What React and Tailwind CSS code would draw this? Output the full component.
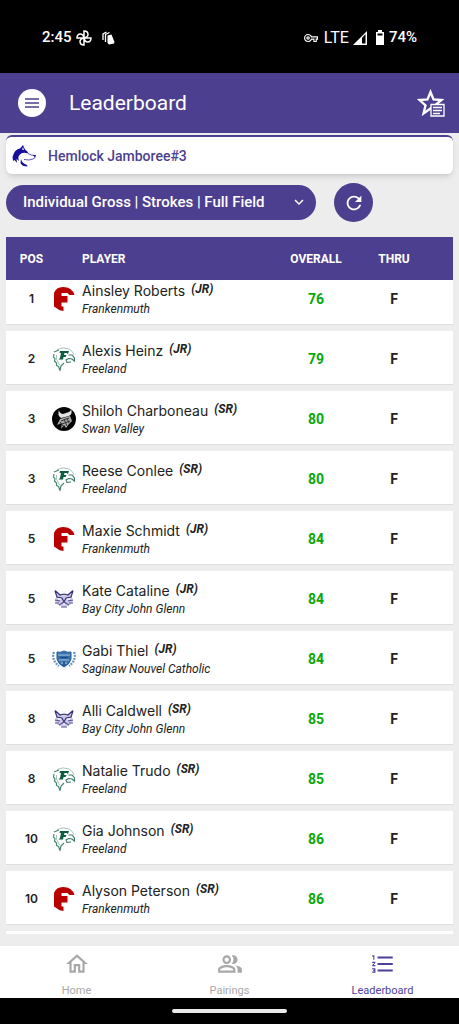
import {
  MdFormatListNumbered,
  MdKeyboardArrowDown,
  MdOutlineHome,
  MdOutlinePeopleAlt,
  MdOutlineVpnKey,
  MdRefresh,
} from 'react-icons/md';

const players = [
  { pos: 1, name: 'Ainsley Roberts', year: 'JR', school: 'Frankenmuth', score: 76 },
  { pos: 2, name: 'Alexis Heinz', year: 'JR', school: 'Freeland', score: 79 },
  { pos: 3, name: 'Shiloh Charboneau', year: 'SR', school: 'Swan Valley', score: 80 },
  { pos: 3, name: 'Reese Conlee', year: 'SR', school: 'Freeland', score: 80 },
  { pos: 5, name: 'Maxie Schmidt', year: 'JR', school: 'Frankenmuth', score: 84 },
  { pos: 5, name: 'Kate Cataline', year: 'JR', school: 'Bay City John Glenn', score: 84 },
  { pos: 5, name: 'Gabi Thiel', year: 'JR', school: 'Saginaw Nouvel Catholic', score: 84 },
  { pos: 8, name: 'Alli Caldwell', year: 'SR', school: 'Bay City John Glenn', score: 85 },
  { pos: 8, name: 'Natalie Trudo', year: 'SR', school: 'Freeland', score: 85 },
  { pos: 10, name: 'Gia Johnson', year: 'SR', school: 'Freeland', score: 86 },
  { pos: 10, name: 'Alyson Peterson', year: 'SR', school: 'Frankenmuth', score: 86 },
];

function FrankenmuthLogo() {
  return (
    <svg viewBox="0 0 24 24" className="size-6 shrink-0" fill="#b90000" aria-hidden="true">
      <path d="M2 6 Q4 0 11 0 Q20 0 22.500 8 H17.500 L15.500 6 H9.500 V9 H15.500 V15.500 H9.500 V19.500 H11.500 V24 Q7 23.500 5 21.500 L2 19.500 Z" />
    </svg>
  );
}

function FreelandLogo() {
  return (
    <svg viewBox="0 0 24 24" className="size-6 shrink-0" fill="none" aria-hidden="true">
      <path d="M5 2.500 Q11 -0.500 17 2 Q21 4 22 8" stroke="#a5c6ba" strokeWidth="1" />
      <path d="M2 5 L7 3 M2 7 L1.500 10 L3 12 L2.500 14 L4.500 16 L4.500 18.500 L6.500 19.500 L8 23.500 L9 19 L12 16" stroke="#4a8570" strokeWidth="1.200" />
      <path d="M4.500 8 V12 L6.500 16 L7.500 18" stroke="#a5c6ba" strokeWidth="1" />
      <path d="M8 4 H17 L16 7 L14.500 6 H12.500 L12 8 H14.500 L13.500 10 H11.500 L11 12.500 H6.500 L8 11 L9 6 H7.500 Z" fill="#0d5b40" />
      <path d="M16.500 8 L20 8 L22.500 11 L22.500 14 L20 12 L16.500 11.500 L14 13 L15 15.500 L19 15" stroke="#367761" strokeWidth="1.100" />
    </svg>
  );
}

function SwanValleyLogo() {
  return (
    <svg viewBox="0 0 24 24" className="size-6 shrink-0" fill="none" aria-hidden="true">
      <circle cx="12" cy="12" r="12" fill="#050505" />
      <path d="M7 3 Q7 6 11 7 L17 5 Q19 4 19 2 Q21 7 17 9 L9 11 Q5 8 7 3 Z" fill="#e2e2e2" />
      <path d="M8 12 L18 9 L20 14 L17 17 L14 21 L12 18 L9 22 L10 16 L5 18 Z" fill="#a9a9a9" />
      <path d="M9 14 L17 11 M10 17 L18 14 M12 12 L15 19 M8 15 L12 20 M15 11 L17 16" stroke="#333" strokeWidth="1" />
    </svg>
  );
}

function JohnGlennLogo() {
  return (
    <svg viewBox="0 0 24 24" className="size-6 shrink-0" fill="none" aria-hidden="true">
      <path d="M4 5 L9 7 H15 L20 5 L20 10 L21 14 L18 18 L12 20 L6 18 L3 14 L4 10 Z" fill="#cfcce2" />
      <path d="M3 3.500 L8 8 L12 7 L16 8 L21 3.500 M3 4 L5 10 L10 11 L12 15 L14 11 L19 10 L21 4" stroke="#38327f" strokeWidth="1.200" />
      <path d="M3 13 L8 14 M3 16 L7 16 M21 13 L16 14 M21 16 L17 16 M7 18 L12 15 L17 18 M9 20 H15" stroke="#544e98" strokeWidth="1.200" />
      <path d="M6 12 H9 M15 12 H18 M11 17 H13" stroke="#fff" strokeWidth="1" />
    </svg>
  );
}

function NouvelLogo() {
  return (
    <svg viewBox="0 0 24 24" className="size-6 shrink-0" fill="none" aria-hidden="true">
      <path d="M2 5 Q-1 13 7 19 M22 5 Q25 13 17 19" stroke="#6c92bd" strokeWidth="2.200" strokeDasharray="2 1" />
      <path d="M5 5 Q9 6 12 4 Q15 6 19 5 V12 Q18 17 12 20 Q6 17 5 12 Z" fill="#3973ad" stroke="#245c9b" strokeWidth="1" />
      <path d="M6 8 H18 M7 13 H17 M9 16 H15" stroke="#a9c6df" strokeWidth="1" />
      <path d="M8 10.500 H16 M12 14 V19" stroke="#194c88" strokeWidth="1.500" />
    </svg>
  );
}

function HuskyLogo() {
  return (
    <svg viewBox="0 0 24 22" className="w-6 shrink-0" fill="#17109b" aria-hidden="true">
      <path d="M1 16 L0.500 12 L2 8 Q4 4 8 3.500 L11 0 L13 4.500 Q15.500 6 16.500 8.500 L14 8 Q10 7 7.500 10 Q5.500 12 7 16 L4.500 14 L5 18 L2.500 15 Z" />
      <path d="M16 8.500 Q19 10.500 23 10.500 Q24 13 21 14 L17 15 L12 14.500" fill="none" stroke="#5b57b5" strokeWidth="1" />
      <path d="M21 10 H24 L23 12.500 Z" />
      <path d="M9 14 Q10 18.500 15 20 L15.500 21.500 Q10 21.500 8.500 18 Z" />
      <path d="M10 4.500 L11 2 L12 5 Z" fill="#fff" />
    </svg>
  );
}

const logos = {
  Frankenmuth: FrankenmuthLogo,
  Freeland: FreelandLogo,
  'Swan Valley': SwanValleyLogo,
  'Bay City John Glenn': JohnGlennLogo,
  'Saginaw Nouvel Catholic': NouvelLogo,
};

function StatusBar() {
  return (
    <div className="flex h-[73px] shrink-0 items-center justify-between bg-black pt-0.5 pr-[42px] pl-[42px] text-[15px] font-medium text-white">
      <div className="flex items-center">
        <span>2:45</span>
        <svg viewBox="0 0 16 16" className="ml-1 size-4" fill="none" stroke="white" strokeWidth="1.500" aria-hidden="true">
          <path d="M8 8 V1 Q12 1 12 4.500 Q12 7 8 8 Z M8 8 H15 Q15 12 11.500 12 Q9 12 8 8 Z M8 8 V15 Q4 15 4 11.500 Q4 9 8 8 Z M8 8 H1 Q1 4 4.500 4 Q7 4 8 8 Z" />
        </svg>
        <svg viewBox="0 0 14 14" className="ml-2.5 size-3.5" fill="white" aria-hidden="true">
          <path d="M5.500 4.500 L9.500 3.500 L12.500 11 L12 12.500 L7 13.500 L5.500 12 Z" />
          <path d="M3.500 11 V3.500 L7.500 1.500 M1 9 V3 L4.500 1" fill="none" stroke="white" strokeWidth="1.300" />
        </svg>
      </div>
      <div className="flex items-center">
        <MdOutlineVpnKey className="size-3.5" />
        <span className="ml-1.5 text-base font-normal">LTE</span>
        <svg viewBox="0 0 14 14" className="ml-1 size-3.5" aria-hidden="true">
          <path d="M0 14 L14 0 V14 Z" fill="white" />
          <path d="M9 7 L12.500 3 V12.500 H9 Z" fill="black" />
        </svg>
        <svg viewBox="0 0 10 15" className="ml-2 h-[15px] w-2.5" aria-hidden="true">
          <path d="M3 0 H7 V2 H9 V15 H1 V2 H3 Z" fill="white" />
          <path d="M2.500 3.500 H7.500 V5.500 H2.500 Z" fill="black" />
        </svg>
        <span className="ml-1">74%</span>
      </div>
    </div>
  );
}

function Header() {
  return (
    <header className="flex h-[60px] shrink-0 items-center bg-[#4d3f8f] pl-[18px] pr-3.5 text-white">
      <button aria-label="Menu" className="flex size-7 items-center justify-center rounded-full bg-white">
        <svg viewBox="0 0 14 10" className="h-2.5 w-3.5" stroke="#4d3f8f" strokeWidth="1.300" aria-hidden="true">
          <path d="M0 1 H14 M0 5 H14 M0 9 H14" />
        </svg>
      </button>
      <h1 className="ml-[23px] flex-1 pt-0.5 text-[21px]">Leaderboard</h1>
      <button aria-label="Favorites">
        <svg viewBox="0 0 28 28" className="size-7" fill="none" aria-hidden="true">
          <path d="M13.500 3 L16.500 10.500 L24.500 11 L18.500 16 L20.500 24 L13.500 19.500 L6.500 24.500 L8.500 16.500 L2.500 11 L10.500 10.500 Z" stroke="white" strokeWidth="2.300" />
          <path d="M14 15.500 H27 V27 H14 Z" fill="#4d3f8f" stroke="white" strokeWidth="1.300" />
          <path d="M16 18.500 H25 M16 21.500 H25 M16 24.500 H23" stroke="white" strokeWidth="1.300" />
        </svg>
      </button>
    </header>
  );
}

function Leaderboard() {
  return (
    <table className="w-full table-fixed border-separate border-spacing-0">
      <thead>
        <tr className="h-[43px] bg-[#4d3f8f] text-xs font-bold text-white">
          <th className="w-[46px] p-0 pl-[5px] text-center">POS</th>
          <th className="p-0 pl-[30px] text-left">PLAYER</th>
          <th className="w-[78px] p-0 text-center">OVERALL</th>
          <th className="w-[98px] p-0 pr-5 text-center">THRU</th>
        </tr>
      </thead>
      <tbody className="text-[#222] [&_td]:border-b-[6px] [&_td]:border-[#ededed] [&_td]:bg-white [&_td]:pt-[10px] [&_td]:pb-2 [&_td]:shadow-[inset_0_-1px_0_#dedede] [&_tr:first-child_td]:pt-px">
        {players.map((player) => {
          const Logo = logos[player.school];
          return (
            <tr key={player.name}>
              <td className="pl-[5px] text-center font-[Inter] text-xs font-semibold">{player.pos}</td>
              <td>
                <div className="flex items-center gap-1.5 whitespace-nowrap">
                  <Logo />
                  <div>
                    <div className="flex gap-1.5 leading-5">
                      <span className="font-[Inter] text-[14px]">{player.name}</span>
                      <span className="text-xs leading-4 font-bold italic">({player.year})</span>
                    </div>
                    <div className="text-xs leading-4 italic">{player.school}</div>
                  </div>
                </div>
              </td>
              <td className="text-center text-sm font-bold text-[#08a808]">{player.score}</td>
              <td className="pr-5 text-center text-sm font-bold">F</td>
            </tr>
          );
        })}
        <tr aria-hidden="true">
          <td colSpan={4}></td>
        </tr>
      </tbody>
    </table>
  );
}

function BottomNav() {
  return (
    <nav className="grid h-[52px] shrink-0 grid-cols-3 bg-white text-[11px] text-[#a8a8a8]">
      <a href="#home" className="flex flex-col items-center justify-between pt-[5px]">
        <MdOutlineHome className="size-[26px]" />
        <span className="leading-[14px]">Home</span>
      </a>
      <a href="#pairings" className="flex flex-col items-center justify-between pt-[5px]">
        <MdOutlinePeopleAlt className="size-[26px]" />
        <span className="leading-[14px]">Pairings</span>
      </a>
      <a href="#leaderboard" className="flex flex-col items-center justify-between pt-[5px] text-[#4d3f9b]">
        <MdFormatListNumbered className="size-[26px]" />
        <span className="leading-[14px]">Leaderboard</span>
      </a>
    </nav>
  );
}

export default function App() {
  return (
    <div className="flex h-screen flex-col overflow-hidden bg-[#ededed] font-[Roboto,sans-serif]">
      <StatusBar />
      <Header />
      <main className="flex min-h-0 flex-1 flex-col px-1.5 pt-0.5 pb-3">
        <div className="flex h-[39px] shrink-0 items-center gap-3 rounded-md border-t-2 border-[#4d3f8f] bg-white pl-1.5 text-sm font-medium text-[#4d3f8f] shadow-md">
          <HuskyLogo />
          <h2>Hemlock Jamboree#3</h2>
        </div>
        <div className="mt-[9px] flex shrink-0 items-center gap-[18px]">
          <div className="relative h-[35px] w-[310px] text-white">
            <select aria-label="Leaderboard view" className="size-full appearance-none rounded-full bg-[#4d3f8f] pl-[17px] text-[15px] font-medium">
              <option>Individual Gross | Strokes | Full Field</option>
            </select>
            <MdKeyboardArrowDown className="pointer-events-none absolute top-2 right-2 size-[18px]" />
          </div>
          <button aria-label="Refresh" className="flex size-[39px] items-center justify-center rounded-full bg-[#4d3f8f] text-white">
            <MdRefresh className="size-[22px]" />
          </button>
        </div>
        <div className="mt-[15px] min-h-0 flex-1 overflow-hidden">
          <Leaderboard />
        </div>
      </main>
      <BottomNav />
      <div className="flex h-[26px] shrink-0 items-center justify-center bg-black">
        <div className="h-1 w-1/4 rounded-full bg-[#eaeaea]"></div>
      </div>
    </div>
  );
}
